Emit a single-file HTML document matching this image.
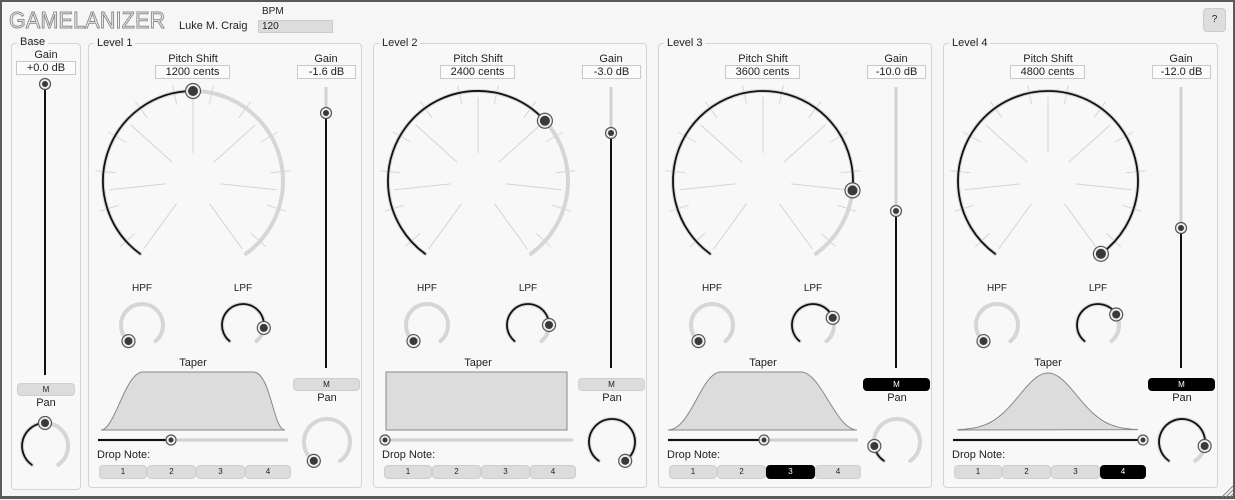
<!DOCTYPE html>
<html><head><meta charset="utf-8">
<style>
*{margin:0;padding:0;box-sizing:border-box}
body{width:1235px;height:500px;background:#f6f6f6;font-family:"Liberation Sans",sans-serif;font-size:11px;color:#222;position:relative;overflow:hidden}
#frame{position:absolute;left:0;top:0;width:1235px;height:499px;border:2px solid #5a5a5a;border-bottom-width:3px}
.t{position:absolute;white-space:nowrap}
.c{position:absolute;text-align:center;transform:translateX(-50%);white-space:nowrap}
.box{position:absolute;border:1px solid #c8c8c8;background:#fbfbfb;text-align:center;font-size:11px;line-height:13px}
.panel{position:absolute;border:1px solid #d4d4d4;border-radius:4px;background:#f8f8f8}
.leg{position:absolute;background:#f6f6f6;padding:0 3px;font-size:11px;line-height:12px}
.btn{position:absolute;background:#dcdcdc;border:1px solid #cfcfcf;border-radius:4px;text-align:center;font-size:8px;line-height:12px}
.btn.on{background:#000;color:#fff;border-color:#000}
svg{position:absolute;left:0;top:0}
</style></head><body>
<div id="frame"></div>
<div class="t" style="left:9px;top:7px;font-size:23px;letter-spacing:0.3px;color:transparent;-webkit-text-stroke:1px #8a8a8a;transform:scaleX(0.93);transform-origin:left">GAMELANIZER</div>
<div class="t" style="left:179px;top:20px">Luke M. Craig</div>
<div class="t" style="left:262px;top:6px;font-size:10px">BPM</div>
<div class="t" style="left:258px;top:20px;width:75px;height:13px;background:#dcdcdc;border:1px solid #ccc;font-size:10px;line-height:11px;padding-left:3px">120</div>
<div class="t" style="left:1203px;top:8px;width:23px;height:24px;background:#dedede;border:1px solid #ccc;border-radius:4px;text-align:center;line-height:22px;font-size:10px">?</div>

<div class="panel" style="left:11px;top:43px;width:70px;height:447px"></div>
<div class="leg" style="left:17px;top:36px">Base</div>
<div class="c" style="left:46px;top:49px">Gain</div>
<div class="box" style="left:16px;top:61px;width:60px;height:14px">+0.0 dB</div>
<div class="btn" style="left:17px;top:383px;width:58px;height:13px">M</div>
<div class="c" style="left:46px;top:397px">Pan</div>

<div class="panel" style="left:88px;top:43px;width:274px;height:445px"></div>
<div class="leg" style="left:94px;top:37px">Level 1</div>
<div class="c" style="left:193px;top:53px">Pitch Shift</div>
<div class="box" style="left:155px;top:65px;width:75px;height:14px">1200 cents</div>
<div class="c" style="left:326px;top:53px">Gain</div>
<div class="box" style="left:297px;top:65px;width:59px;height:14px">-1.6 dB</div>
<div class="c" style="left:142px;top:283px;font-size:10px">HPF</div>
<div class="c" style="left:243px;top:283px;font-size:10px">LPF</div>
<div class="c" style="left:193px;top:357px">Taper</div>
<div class="btn" style="left:293px;top:378px;width:67px;height:13px">M</div>
<div class="c" style="left:327px;top:392px">Pan</div>
<div class="t" style="left:97px;top:449px">Drop Note:</div>
<div class="btn" style="left:99px;top:465px;width:48px;height:14px">1</div>
<div class="btn" style="left:147px;top:465px;width:49px;height:14px">2</div>
<div class="btn" style="left:196px;top:465px;width:49px;height:14px">3</div>
<div class="btn" style="left:245px;top:465px;width:46px;height:14px">4</div>

<div class="panel" style="left:373px;top:43px;width:274px;height:445px"></div>
<div class="leg" style="left:379px;top:37px">Level 2</div>
<div class="c" style="left:478px;top:53px">Pitch Shift</div>
<div class="box" style="left:440px;top:65px;width:75px;height:14px">2400 cents</div>
<div class="c" style="left:611px;top:53px">Gain</div>
<div class="box" style="left:582px;top:65px;width:59px;height:14px">-3.0 dB</div>
<div class="c" style="left:427px;top:283px;font-size:10px">HPF</div>
<div class="c" style="left:528px;top:283px;font-size:10px">LPF</div>
<div class="c" style="left:478px;top:357px">Taper</div>
<div class="btn" style="left:578px;top:378px;width:67px;height:13px">M</div>
<div class="c" style="left:612px;top:392px">Pan</div>
<div class="t" style="left:382px;top:449px">Drop Note:</div>
<div class="btn" style="left:384px;top:465px;width:48px;height:14px">1</div>
<div class="btn" style="left:432px;top:465px;width:49px;height:14px">2</div>
<div class="btn" style="left:481px;top:465px;width:49px;height:14px">3</div>
<div class="btn" style="left:530px;top:465px;width:46px;height:14px">4</div>

<div class="panel" style="left:658px;top:43px;width:274px;height:445px"></div>
<div class="leg" style="left:664px;top:37px">Level 3</div>
<div class="c" style="left:763px;top:53px">Pitch Shift</div>
<div class="box" style="left:725px;top:65px;width:75px;height:14px">3600 cents</div>
<div class="c" style="left:896px;top:53px">Gain</div>
<div class="box" style="left:867px;top:65px;width:59px;height:14px">-10.0 dB</div>
<div class="c" style="left:712px;top:283px;font-size:10px">HPF</div>
<div class="c" style="left:813px;top:283px;font-size:10px">LPF</div>
<div class="c" style="left:763px;top:357px">Taper</div>
<div class="btn on" style="left:863px;top:378px;width:67px;height:13px">M</div>
<div class="c" style="left:897px;top:392px">Pan</div>
<div class="t" style="left:667px;top:449px">Drop Note:</div>
<div class="btn" style="left:669px;top:465px;width:48px;height:14px">1</div>
<div class="btn" style="left:717px;top:465px;width:49px;height:14px">2</div>
<div class="btn on" style="left:766px;top:465px;width:49px;height:14px">3</div>
<div class="btn" style="left:815px;top:465px;width:46px;height:14px">4</div>

<div class="panel" style="left:943px;top:43px;width:275px;height:445px"></div>
<div class="leg" style="left:949px;top:37px">Level 4</div>
<div class="c" style="left:1048px;top:53px">Pitch Shift</div>
<div class="box" style="left:1010px;top:65px;width:75px;height:14px">4800 cents</div>
<div class="c" style="left:1181px;top:53px">Gain</div>
<div class="box" style="left:1152px;top:65px;width:59px;height:14px">-12.0 dB</div>
<div class="c" style="left:997px;top:283px;font-size:10px">HPF</div>
<div class="c" style="left:1098px;top:283px;font-size:10px">LPF</div>
<div class="c" style="left:1048px;top:357px">Taper</div>
<div class="btn on" style="left:1148px;top:378px;width:67px;height:13px">M</div>
<div class="c" style="left:1182px;top:392px">Pan</div>
<div class="t" style="left:952px;top:449px">Drop Note:</div>
<div class="btn" style="left:954px;top:465px;width:48px;height:14px">1</div>
<div class="btn" style="left:1002px;top:465px;width:49px;height:14px">2</div>
<div class="btn" style="left:1051px;top:465px;width:49px;height:14px">3</div>
<div class="btn on" style="left:1100px;top:465px;width:46px;height:14px">4</div>

<svg id="g" width="1235" height="500" viewBox="0 0 1235 500"></svg>
<script>
var s='';
function P(cx,cy,r,a){a=a*Math.PI/180;return [cx+r*Math.sin(a),cy-r*Math.cos(a)];}
function arc(cx,cy,r,a1,a2,col,w){if(a2-a1<0.5)return;var p=P(cx,cy,r,a1),q=P(cx,cy,r,a2);
s+='<path d="M'+p[0].toFixed(1)+' '+p[1].toFixed(1)+' A'+r+' '+r+' 0 '+((a2-a1)>180?1:0)+' 1 '+q[0].toFixed(1)+' '+q[1].toFixed(1)+'" fill="none" stroke="'+col+'" stroke-width="'+w+'" stroke-linecap="round"/>';}
function line(x1,y1,x2,y2,col,w){s+='<line x1="'+x1.toFixed(1)+'" y1="'+y1.toFixed(1)+'" x2="'+x2.toFixed(1)+'" y2="'+y2.toFixed(1)+'" stroke="'+col+'" stroke-width="'+w+'"/>';}
function dot(x,y,r){s+='<circle cx="'+x+'" cy="'+y+'" r="'+(r+1.5)+'" fill="#eee" stroke="#555" stroke-width="1.2"/><circle cx="'+x+'" cy="'+y+'" r="'+(r-1)+'" fill="#3a3a3a"/>';}
function knob(cx,cy,r,lim,v,d){arc(cx,cy,r,-lim,lim,'#d6d6d6',4);arc(cx,cy,r,-lim,v,'#111',1.8);var p=P(cx,cy,r,v);dot(p[0],p[1],d);}
line(45,84,45,375,'#111',2);dot(45,84,4);knob(45,446,23,145,0,5);
var L=[{x:88,p:0,gy:113,lpf:98,pan:-145,tp:83,sh:1},{x:373,p:48,gy:133,lpf:90,pan:145,tp:12,sh:2},{x:658,p:96,gy:211,lpf:70,pan:-100,tp:106,sh:3},{x:943,p:144,gy:228,lpf:60,pan:100,tp:200,sh:4}];
L.forEach(function(l){var x=l.x,cx=x+105,cy=181;
 for(var a=-144;a<=144;a+=48){var p=P(cx,cy,28,a),q=P(cx,cy,84,a);line(p[0],p[1],q[0],q[1],'#d4d4d4',1);}
 for(var a=-132;a<=132;a+=24){var p2=P(cx,cy,78,a),q2=P(cx,cy,98,a);line(p2[0],p2[1],q2[0],q2[1],'#d6d6d6',1);}
 knob(cx,cy,90,144,l.p,6);
 knob(x+54,325,21,140,-140,5);
 knob(x+155,325,21,140,l.lpf,5);
 knob(x+239,442,23,145,l.pan,5);
 var gx=x+238;line(gx,87,gx,l.gy,'#d2d2d2',3);line(gx,l.gy,gx,368,'#111',2);dot(gx,l.gy,4);
 var tx=x+13,ty=372,tb=430,d;
 if(l.sh===1)d='M'+tx+' '+tb+' C'+(tx+14)+' '+tb+' '+(tx+24)+' '+ty+' '+(tx+42)+' '+ty+' L'+(tx+152)+' '+ty+' C'+(tx+170)+' '+ty+' '+(tx+172)+' '+tb+' '+(tx+184)+' '+tb+' Z';
 else if(l.sh===2)d='M'+tx+' '+ty+' H'+(tx+181)+' V'+tb+' H'+tx+' Z';
 else if(l.sh===3)d='M'+(tx-3)+' '+tb+' C'+(tx+20)+' '+tb+' '+(tx+30)+' '+ty+' '+(tx+50)+' '+ty+' L'+(tx+130)+' '+ty+' C'+(tx+150)+' '+ty+' '+(tx+165)+' '+tb+' '+(tx+186)+' '+tb+' Z';
 else{d='M'+(tx+2)+' '+tb;for(var i=0;i<=60;i++){var u=i/60,xx=tx+2+u*180,g=Math.exp(-Math.pow((u-0.5)/0.16,2)/2);d+=' L'+xx.toFixed(1)+' '+(tb-(tb-ty-1)*g).toFixed(1);}d+=' Z';}
 s+='<path d="'+d+'" fill="#dcdcdc" stroke="#888" stroke-width="1"/>';
 var sx=x+10,ex=x+200,kx=x+l.tp;line(sx,440,ex,440,'#d0d0d0',3);line(sx,440,kx,440,'#111',2);dot(kx,440,3.5);
});
s+='<g stroke="#888" stroke-width="1"><line x1="1222" y1="497" x2="1233" y2="486"/><line x1="1226" y1="497" x2="1233" y2="490"/><line x1="1230" y1="497" x2="1233" y2="494"/></g>';
document.getElementById('g').innerHTML=s;
</script>
</body></html>
